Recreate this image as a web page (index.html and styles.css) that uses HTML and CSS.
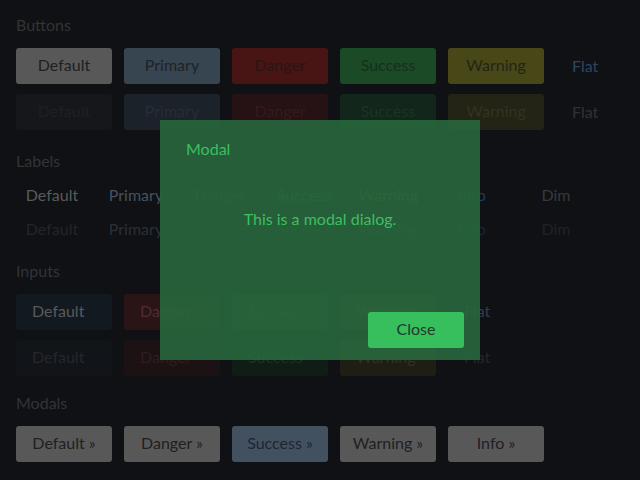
FILE: index.html
```html
<!DOCTYPE html>
<html lang="en">
<head>
<meta charset="utf-8">
<title>UI Kit</title>
<link rel="stylesheet" href="styles.css">
</head>
<body>
<main class="page">
  <section class="section">
    <h2 class="heading">Buttons</h2>
    <div class="rows">
      <div class="row">
        <span class="btn b-default">Default</span>
        <span class="btn b-primary">Primary</span>
        <span class="btn b-danger">Danger</span>
        <span class="btn b-success">Success</span>
        <span class="btn b-warning">Warning</span>
        <span class="flat f-blue">Flat</span>
      </div>
      <div class="row">
        <span class="btn b-default-d">Default</span>
        <span class="btn b-primary-d">Primary</span>
        <span class="btn b-danger-d">Danger</span>
        <span class="btn b-success-d">Success</span>
        <span class="btn b-warning-d">Warning</span>
        <span class="flat f-grey">Flat</span>
      </div>
    </div>
  </section>

  <section class="section labels-section">
    <h2 class="heading">Labels</h2>
    <div class="rows labels">
      <div class="row">
        <span class="label l-default">Default</span>
        <span class="label l-primary">Primary</span>
        <span class="label l-danger">Danger</span>
        <span class="label l-success">Success</span>
        <span class="label l-warning">Warning</span>
        <span class="label l-info">Info</span>
        <span class="label l-dim">Dim</span>
      </div>
      <div class="row">
        <span class="label l-default-d">Default</span>
        <span class="label l-primary-d">Primary</span>
        <span class="label l-danger-d">Danger</span>
        <span class="label l-success-d">Success</span>
        <span class="label l-warning-d">Warning</span>
        <span class="label l-info-d">Info</span>
        <span class="label l-dim-d">Dim</span>
      </div>
    </div>
  </section>

  <section class="section inputs-section">
    <h2 class="heading">Inputs</h2>
    <div class="rows">
      <div class="row">
        <span class="input i-default">Default</span>
        <span class="input i-danger">Danger</span>
        <span class="input i-success">Success</span>
        <span class="input i-warning">Warning</span>
        <span class="input i-flat">Flat</span>
      </div>
      <div class="row">
        <span class="input i-default-d">Default</span>
        <span class="input i-danger-d">Danger</span>
        <span class="input i-success-d">Success</span>
        <span class="input i-warning-d">Warning</span>
        <span class="input i-flat-d">Flat</span>
      </div>
    </div>
  </section>

  <section class="section modals-section">
    <h2 class="heading">Modals</h2>
    <div class="rows">
      <div class="row">
        <span class="btn m-grey">Default »</span>
        <span class="btn m-grey">Danger »</span>
        <span class="btn m-blue">Success »</span>
        <span class="btn m-grey">Warning »</span>
        <span class="btn m-grey">Info »</span>
      </div>
    </div>
  </section>
</main>

<div class="modal" role="dialog">
  <div class="modal-title">Modal</div>
  <div class="modal-body">This is a modal dialog.</div>
  <div class="modal-footer">
    <span class="btn close-btn">Close</span>
  </div>
</div>
</body>
</html>
```
FILE: styles.css
```css
html, body {
  margin: 0;
  padding: 0;
  width: 640px;
  height: 480px;
  overflow: hidden;
  background: #101114;
  font-family: "Lato", "Liberation Sans", sans-serif;
  font-size: 16px;
}

.page {
  padding: 15px 16px 0;
  display: flex;
  flex-direction: column;
}

.heading {
  margin: 0 0 13px;
  font-size: 16px;
  font-weight: 400;
  line-height: 20px;
  height: 20px;
  color: #323437;
}

.labels-section { margin-top: 21px; }
.labels-section .heading { margin-bottom: 12px; }
.inputs-section { margin-top: 20px; }
.modals-section { margin-top: 17px; }

.rows {
  display: flex;
  flex-direction: column;
  gap: 10px;
}

.row {
  display: flex;
  gap: 12px;
  align-items: center;
}

.btn {
  width: 96px;
  height: 36px;
  box-sizing: border-box;
  padding-bottom: 2px;
  border-radius: 3px;
  display: flex;
  align-items: center;
  justify-content: center;
  line-height: 20px;
  color: #1e1f21;
}

.flat {
  height: 36px;
  box-sizing: border-box;
  padding: 0 16px 2px;
  display: flex;
  align-items: center;
}

.b-default { background: #585858; color: #1e1f21; }
.b-primary { background: #374550; color: #1c232a; }
.b-danger  { background: #481414; color: #2a1515; }
.b-success { background: #1a4a26; color: #17301d; }
.b-warning { background: #484718; color: #252514; }
.f-blue { color: #2d4660; }

.b-default-d { background: #16171a; color: #1f2023; }
.b-primary-d { background: #1c222a; color: #272d36; }
.b-danger-d  { background: #261214; color: #37191b; }
.b-success-d { background: #12261b; color: #1a3424; }
.b-warning-d { background: #242416; color: #33331d; }
.f-grey { color: #303134; }

.labels { gap: 10px; }

.label {
  width: 72px;
  height: 24px;
  box-sizing: border-box;
  padding-bottom: 2px;
  display: flex;
  align-items: center;
  justify-content: center;
  white-space: nowrap;
}

.l-default { color: #5a5a5c; }
.l-primary { color: #45525f; }
.l-danger  { color: #4a2222; }
.l-success { color: #24502f; }
.l-warning { color: #4c4c22; }
.l-info    { color: #1e3c5f; }
.l-dim     { color: #38393c; }

.l-default-d { color: #242528; }
.l-primary-d { color: #2a3038; }
.l-danger-d  { color: #2c1719; }
.l-success-d { color: #173020; }
.l-warning-d { color: #2e2e1a; }
.l-info-d    { color: #17273a; }
.l-dim-d     { color: #212225; }

.input {
  width: 96px;
  height: 36px;
  box-sizing: border-box;
  border-radius: 3px;
  padding: 0 16px 3px;
  display: flex;
  align-items: center;
  white-space: nowrap;
}

.i-default { background: #131920; color: #58595b; }
.i-danger  { background: #2a1416; color: #502d2e; }
.i-success { background: #142a1c; color: #24502f; }
.i-warning { background: #2a2a18; color: #4c4c2a; }
.i-flat    { color: #323c4b; }

.i-default-d { background: #11151a; color: #26272a; }
.i-danger-d  { background: #1c1214; color: #2f1d1f; }
.i-success-d { background: #101c16; color: #1a3322; }
.i-warning-d { background: #1e1e14; color: #33331f; }
.i-flat-d    { color: #232528; }

.m-grey { background: #585858; color: #1f2022; }
.m-blue { background: #425160; color: #1e2530; }

.modal {
  position: absolute;
  left: 160px;
  top: 120px;
  width: 320px;
  height: 240px;
  background: rgba(40, 103, 61, 0.9);
  display: flex;
  flex-direction: column;
}

.modal-title {
  padding: 19px 26px 0;
  line-height: 20px;
  color: #3dbf60;
}

.modal-body {
  margin-top: 50px;
  line-height: 20px;
  text-align: center;
  color: #3dbf60;
}

.modal-footer {
  margin-top: auto;
  padding: 0 16px 12px;
  display: flex;
  justify-content: flex-end;
}

.close-btn {
  background: #38bf5d;
  color: #1f3a2a;
}
```
